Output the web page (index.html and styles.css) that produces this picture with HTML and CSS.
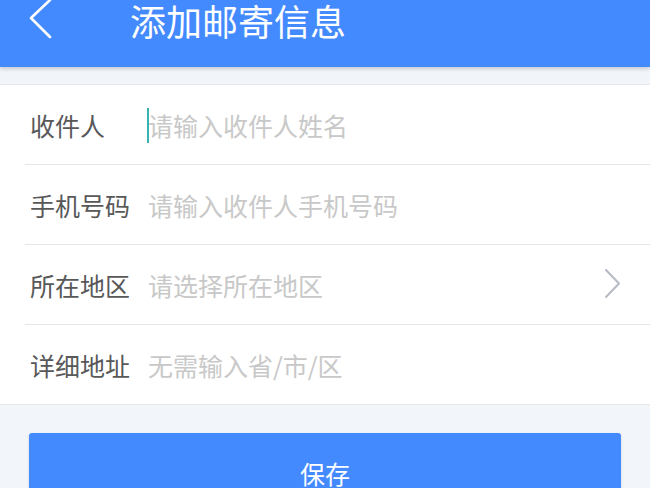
FILE: index.html
```html
<!DOCTYPE html>
<html lang="zh-CN">
<head>
<meta charset="utf-8">
<title>添加邮寄信息</title>
<link rel="stylesheet" href="styles.css">
</head>
<body>
<header class="topbar">
  <span class="back">
    <svg width="24" height="40" viewBox="0 0 24 40"><polyline points="21,0 2,18 21,37" fill="none" stroke="#fff" stroke-width="2.6" stroke-linecap="round" stroke-linejoin="round"/></svg>
  </span>
  <h1 class="title">添加邮寄信息</h1>
</header>
<div class="gap"></div>
<div class="form">
  <div class="row">
    <span class="label">收件人</span>
    <span class="field"><span class="cursor"></span><span class="ph">请输入收件人姓名</span></span>
  </div>
  <div class="row">
    <span class="label">手机号码</span>
    <span class="field"><span class="ph">请输入收件人手机号码</span></span>
  </div>
  <div class="row">
    <span class="label">所在地区</span>
    <span class="field"><span class="ph">请选择所在地区</span></span>
    <svg class="arrow" width="18" height="30" viewBox="0 0 18 30"><polyline points="2,1 15,14.5 2,28" fill="none" stroke="#b6bac4" stroke-width="2" stroke-linecap="round" stroke-linejoin="round"/></svg>
  </div>
  <div class="row last">
    <span class="label">详细地址</span>
    <span class="field"><span class="ph">无需输入省/市/区</span></span>
  </div>
</div>
<div class="actions">
  <button class="save">保存</button>
</div>
</body>
</html>
```

FILE: styles.css
```css
* { box-sizing: border-box; }
html, body { margin: 0; padding: 0; }
body {
  width: 650px;
  height: 488px;
  overflow: hidden;
  background: #f2f5fa;
  font-family: "Noto Sans CJK SC", "Noto Sans", sans-serif;
}
.topbar {
  height: 67px;
  background: #448aff;
  display: flex;
  align-items: flex-start;
  box-shadow: 0 2px 4px rgba(0, 0, 0, 0.18);
  position: relative;
  z-index: 1;
}
.back {
  display: flex;
  margin-left: 29px;
  width: 24px;
  height: 40px;
}
.title {
  margin: 1px 0 0 77px;
  font-size: 36px;
  font-weight: normal;
  color: #fff;
  line-height: 38px;
}
.gap {
  height: 17px;
}
.form {
  background: #fff;
  border-top: 1px solid #e6e8ec;
  border-bottom: 1px solid #e6e8ec;
}
.row {
  height: 80px;
  margin-left: 25px;
  padding-left: 5px;
  padding-right: 28px;
  display: flex;
  align-items: center;
  border-bottom: 1px solid #e6e6e6;
}
.row.last { border-bottom: none; height: 79px; }
.label {
  width: 118px;
  flex-shrink: 0;
  font-size: 25px;
  color: #585858;
}
.field {
  flex: 1;
  display: flex;
  align-items: center;
  position: relative;
}
.ph {
  font-size: 25px;
  color: #c8c8c8;
}
.cursor {
  position: absolute;
  left: -1px;
  top: 50%;
  margin-top: -17px;
  width: 2px;
  height: 35px;
  background: #36b3b3;
}
.arrow { flex-shrink: 0; margin-top: -2px; }
.actions {
  padding: 28px 29px 0 29px;
}
.save {
  display: block;
  width: 100%;
  height: 80px;
  border: none;
  border-radius: 3px;
  background: #448aff;
  color: #fff;
  font-family: inherit;
  font-size: 25px;
  line-height: 1;
  box-shadow: 0 1px 3px rgba(0, 0, 0, 0.12);
}
```
